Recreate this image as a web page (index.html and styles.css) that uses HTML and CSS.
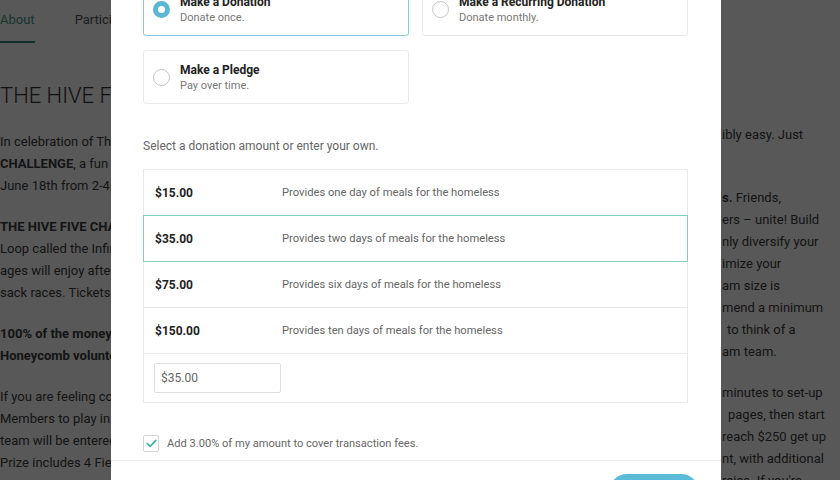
FILE: index.html
```html
<!DOCTYPE html>
<html lang="en">
<head>
<meta charset="utf-8">
<title>Donate</title>
<link rel="stylesheet" href="styles.css">
</head>
<body>
<div class="page">
  <nav class="tabs">
    <span class="tab active">About</span>
    <span class="tab">Participants</span>
  </nav>
  <div class="columns">
    <div class="col-left">
      <h1 class="title">THE HIVE FIVE CHALLENGE</h1>
      <p>In celebration of The Honeycomb's anniversary</p>
      <p class="cont"><b>CHALLENGE</b>, a fun afternoon for the whole family,</p>
      <p class="cont">June 18th from 2-4pm at the park.</p>
      <p class="gap"><b>THE HIVE FIVE CHALLENGE</b> takes place on the</p>
      <p class="cont">Loop called the Infinity Trail. Players of all</p>
      <p class="cont">ages will enjoy afternoon games like tug of war and</p>
      <p class="cont">sack races. Tickets are available at the door.</p>
      <p class="gap"><b>100% of the money raised will support</b></p>
      <p class="cont"><b>Honeycomb volunteers</b> in our community.</p>
      <p class="gap">If you are feeling competitive, invite Team</p>
      <p class="cont">Members to play in the challenge. Each</p>
      <p class="cont">team will be entered to win a Grand Prize.</p>
      <p class="cont">Prize includes 4 Field passes for the season.</p>
    </div>
    <div class="col-right">
      <p>ibly easy. Just</p>
      <p class="cont">&nbsp;</p>
      <p class="gap"><b>s.</b> Friends,</p>
      <p class="cont">ers – unite! Build</p>
      <p class="cont">nly diversify your</p>
      <p class="cont">imize your</p>
      <p class="cont">am size is</p>
      <p class="cont">mend a minimum</p>
      <p class="cont ind">to think of a</p>
      <p class="cont">am team.</p>
      <p class="gap">minutes to set-up</p>
      <p class="cont ind2">pages, then start</p>
      <p class="cont">reach $250 get up</p>
      <p class="cont">nt, with additional</p>
      <p class="cont">raise. If you're</p>
    </div>
  </div>
</div>

<div class="overlay">
  <div class="modal">
    <div class="modal-body">
      <div class="options">
        <label class="option selected">
          <span class="radio on"></span>
          <span class="opt-text"><span class="opt-title">Make a Donation</span><span class="opt-sub">Donate once.</span></span>
        </label>
        <label class="option">
          <span class="radio"></span>
          <span class="opt-text"><span class="opt-title">Make a Recurring Donation</span><span class="opt-sub">Donate monthly.</span></span>
        </label>
        <label class="option">
          <span class="radio"></span>
          <span class="opt-text"><span class="opt-title">Make a Pledge</span><span class="opt-sub">Pay over time.</span></span>
        </label>
      </div>

      <p class="prompt">Select a donation amount or enter your own.</p>

      <div class="amounts">
        <div class="amount-row"><span class="amt">$15.00</span><span class="desc">Provides one day of meals for the homeless</span></div>
        <div class="amount-row active-row"><span class="amt">$35.00</span><span class="desc">Provides two days of meals for the homeless</span></div>
        <div class="amount-row"><span class="amt">$75.00</span><span class="desc">Provides six days of meals for the homeless</span></div>
        <div class="amount-row"><span class="amt">$150.00</span><span class="desc">Provides ten days of meals for the homeless</span></div>
        <div class="amount-row custom"><input class="amt-input" type="text" value="$35.00"></div>
      </div>

      <div class="fees">
        <span class="checkbox">
          <svg width="11" height="9" viewBox="0 0 11 9"><path d="M1.2 4.6 L4.2 7.4 L9.8 1.4" fill="none" stroke="#3fae9c" stroke-width="1.6" stroke-linecap="round" stroke-linejoin="round"/></svg>
        </span>
        <span class="fees-label">Add 3.00% of my amount to cover transaction fees.</span>
      </div>
    </div>
    <div class="modal-footer">
      <button class="btn">Continue</button>
    </div>
  </div>
</div>
</body>
</html>
```

FILE: styles.css
```css
html, body {
  margin: 0;
  padding: 0;
  height: 100%;
  overflow: hidden;
}
body {
  font-family: Roboto, "Liberation Sans", sans-serif;
  background: #fff;
  color: #333;
}

/* background page */
.page {
  width: 840px;
}
.tabs {
  display: flex;
  gap: 40px;
  height: 42px;
  align-items: flex-start;
}
.tab {
  font-size: 13px;
  line-height: 14px;
  padding-top: 13px;
  padding-bottom: 14px;
  color: #555;
}
.tab.active {
  color: #3a9c8e;
  border-bottom: 2px solid #2f8b7c;
}
.columns {
  display: flex;
}
.col-left {
  width: 420px;
}
.col-right {
  margin-left: 302px;
  padding-top: 82px;
}
.title {
  margin: 40px 0 21px;
  font-size: 22px;
  line-height: 28px;
  font-weight: 300;
  color: #333;
}
.columns p {
  margin: 0;
  font-size: 13px;
  line-height: 22px;
  color: #3c3c3c;
  white-space: nowrap;
}
.columns p.gap {
  margin-top: 19px;
}
.columns b {
  font-weight: 700;
}
.col-right p.ind { padding-left: 5px; }
.col-right p.ind2 { padding-left: 6px; }

/* overlay + modal */
.overlay {
  position: fixed;
  inset: 0;
  background: rgba(0, 0, 0, 0.655);
}
.modal {
  margin-left: 111px;
  width: 610px;
  height: 100%;
  background: #fff;
  display: flex;
  flex-direction: column;
  overflow: hidden;
}
.modal-body {
  padding: 0 33px 0 32px;
}
.options {
  margin-top: -18px;
  display: grid;
  grid-template-columns: 1fr 1fr;
  column-gap: 13px;
  row-gap: 14px;
}
.option {
  box-sizing: border-box;
  height: 54px;
  border: 1px solid #e9e9e9;
  border-radius: 3px;
  display: flex;
  align-items: center;
  padding-left: 9px;
  gap: 10px;
}
.option.selected {
  border-color: #86c9df;
}
.radio {
  box-sizing: border-box;
  width: 17px;
  height: 17px;
  border-radius: 50%;
  border: 1.5px solid #c4c4c4;
  flex: none;
}
.radio.on {
  border: 5px solid #5ab7d6;
}
.opt-text {
  display: flex;
  flex-direction: column;
  padding-top: 2px;
}
.opt-title {
  font-size: 12px;
  line-height: 16px;
  font-weight: 700;
  color: #222;
}
.opt-sub {
  font-size: 11px;
  line-height: 16px;
  color: #777;
}
.prompt {
  margin: 34px 0 0;
  font-size: 12px;
  line-height: 16px;
  color: #666;
}
.amounts {
  margin-top: 15px;
  display: flex;
  flex-direction: column;
}
.amount-row {
  box-sizing: border-box;
  height: 47px;
  border: 1px solid #e9e9e9;
  margin-top: -1px;
  display: flex;
  align-items: center;
  padding-left: 11px;
  position: relative;
}
.amount-row:first-child {
  margin-top: 0;
}
.amount-row.active-row {
  border: 1px solid #84d0c0;
  z-index: 2;
}
.amt {
  width: 127px;
  font-size: 12px;
  font-weight: 700;
  color: #222;
}
.desc {
  font-size: 11.2px;
  color: #666;
}
.amount-row.custom {
  height: 50px;
  align-items: flex-start;
  padding-top: 9px;
  padding-left: 10px;
}
.amt-input {
  box-sizing: border-box;
  width: 127px;
  height: 30px;
  border: 1px solid #dedede;
  border-radius: 2px;
  padding: 0 6px;
  font-family: Roboto, "Liberation Sans", sans-serif;
  font-size: 12px;
  color: #666;
  outline: none;
}
.fees {
  margin-top: 32px;
  margin-bottom: 8px;
  display: flex;
  align-items: center;
  gap: 8px;
}
.checkbox {
  box-sizing: border-box;
  width: 16px;
  height: 17px;
  border: 1px solid #d4d4d4;
  border-radius: 2px;
  display: flex;
  align-items: center;
  justify-content: center;
}
.fees-label {
  font-size: 11.1px;
  line-height: 16px;
  color: #666;
}
.modal-footer {
  border-top: 1px solid #ececec;
  padding: 13px 22px 0 0;
  display: flex;
  justify-content: flex-end;
}
.btn {
  width: 90px;
  height: 36px;
  border: none;
  border-radius: 18px;
  background: #5bbcd9;
  color: #fff;
  font-family: Roboto, "Liberation Sans", sans-serif;
  font-size: 13px;
  font-weight: 500;
}
```
